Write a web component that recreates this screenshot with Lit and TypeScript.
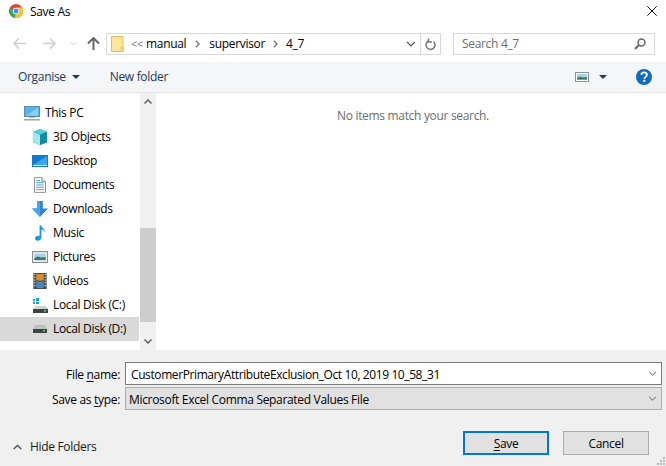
import { LitElement, html, css, svg } from "lit";
import { customElement } from "lit/decorators.js";

const chev = (w = 10, h = 6, c = "#555") => html`<svg width=${w} height=${h} viewBox="0 0 10 6"><path d="M1 1l4 4 4-4" fill="none" stroke=${c} stroke-width="1.2"/></svg>`;

const picture = svg`<rect x=".5" y=".5" width="13" height="9" fill="#fff" stroke="#8f8f8f"/><rect x="2" y="2" width="10" height="6" fill="#a9d3ea"/><path d="M2 6l3-1.500 3 1 4-.5v2.500H2z" fill="#3f7a5c"/>`;

const icons: Record<string, unknown> = {
  pc: html`<svg width="16" height="15" viewBox="0 0 16 15"><rect x=".5" y=".5" width="15" height="10" fill="#4fb6f0" stroke="#5f8fa8"/><path d="M2 9.500L14 2v7.500z" fill="#8ad4f7"/><rect x="5" y="11" width="6" height="1" fill="#9db4c0"/><rect y="13" width="16" height="1.500" fill="#9aa7ae"/></svg>`,
  obj: html`<svg width="16" height="16" viewBox="0 0 17 17"><path d="M8.500 0L16 3v11l-7.500 3L1 14V3z" fill="#18a9b8"/><path d="M1 3l7.500 3v11L1 14z" fill="#a7e7ec"/><path d="M8.500 0L16 3 8.500 6 1 3z" fill="#4dd0da"/><path d="M8.500 6L16 3v11l-7.500 3z" fill="#0f8da3"/></svg>`,
  desk: html`<svg width="16" height="12" viewBox="0 0 16 12"><rect width="16" height="12" fill="#0f79d0"/><path d="M1 10L15 1v9z" fill="#3fa3ea"/><rect x="1" y="10" width="14" height="1" fill="#d9eefb"/></svg>`,
  docs: html`<svg width="12" height="16" viewBox="0 0 13 17"><path d="M.5.500h8l4 4v12H.5z" fill="#fff" stroke="#8a8a8a"/><path d="M8.500.500v4h4" fill="#e3e3e3" stroke="#8a8a8a"/><path d="M2.500 3.500h4M2.500 6h8M2.500 8.500h8M2.500 11h8M2.500 13.500h8" stroke="#2f9bd8"/></svg>`,
  down: html`<svg width="16" height="16" viewBox="0 0 17 17"><path d="M5.500 0h6v8H17l-8.500 9L0 8h5.500z" fill="#2f86d6"/><path d="M5.500 0h3v17L0 8h5.500z" fill="#4ba2ea"/></svg>`,
  music: html`<svg width="11" height="16" viewBox="0 0 12 17"><path d="M5 0h1.700c.3 3 4.800 4 4.300 8-.6-2-2.700-3-4-3.200V13.500C7 15.500 5 17 3 17S0 15.800 0 14.300 1.700 11.500 3.500 11.500c.6 0 1.100.1 1.500.3z" fill="#1c96e8"/></svg>`,
  pics: html`<svg width="16" height="12" viewBox="0 0 14 10" preserveAspectRatio="none">${picture}</svg>`,
  vid: html`<svg width="14" height="16" viewBox="0 0 14 17"><rect width="14" height="17" fill="#3f4a50"/><rect x="3" y="1" width="8" height="7" fill="#d98f2a"/><rect x="3" y="9" width="8" height="7" fill="#4f86b8"/><path d="M1 1.500h1M1 4.500h1M1 7.500h1M1 10.500h1M1 13.500h1M12 1.500h1M12 4.500h1M12 7.500h1M12 10.500h1M12 13.500h1" stroke="#fff" stroke-width="1.400"/></svg>`,
  c: html`<svg width="15" height="15" viewBox="0 0 15 15"><path d="M0 1h2v2H0zM3 0h3v3H3zM0 4h2v2H0zM3 4h3v2H3z" fill="#1ba1e2"/><path d="M2 8h11l2 3H0z" fill="#cfd3d4"/><rect y="11" width="15" height="4" fill="#3d4446"/><rect x="11" y="12" width="2" height="1.500" fill="#5fd35f"/></svg>`,
  d: html`<svg width="14" height="8" viewBox="0 0 14 8"><path d="M2 0h10l2 4H0z" fill="#bcc0c1"/><rect y="4" width="14" height="4" fill="#3d4446"/><rect x="10" y="5" width="2" height="1.500" fill="#5fd35f"/></svg>`,
};

const items: [string, string][] = [
  ["3D Objects", "obj"], ["Desktop", "desk"], ["Documents", "docs"], ["Downloads", "down"], ["Music", "music"],
  ["Pictures", "pics"], ["Videos", "vid"], ["Local Disk (C:)", "c"], ["Local Disk (D:)", "d"],
];

function chevR() {
  return html`<svg width="5" height="8" viewBox="0 0 5 8"><path d="M.8.800L4 4 .8 7.200" fill="none" stroke="#777" stroke-width="1.400"/></svg>`;
}

@customElement("app-root")
export class AppRoot extends LitElement {
  static styles = css`
    :host { display: block; width: 666px; height: 466px; background: #fff; overflow: hidden; }
    * { box-sizing: border-box; }
    .win { width: 666px; height: 466px; display: flex; flex-direction: column; font: 12px/16px "Open Sans", "Noto Sans", sans-serif; letter-spacing: -0.32px; color: #000; }
    .title { height: 33px; flex: none; display: flex; align-items: flex-start; padding: 4px 9px 0 9px; gap: 7px; }
    .title .x { margin-left: auto; margin-top: 2px; }
    .nav { height: 29px; flex: none; display: flex; align-items: flex-start; padding: 0 11px 0 13px; }
    .navbtns { width: 93px; height: 21px; display: flex; align-items: center; flex: none; }
    .fwd { margin-left: 17px; }
    .rec { margin-left: 14px; }
    .up { margin-left: 10px; }
    .addr { width: 335px; height: 22px; border: 1px solid #d9d9d9; display: flex; align-items: center; flex: none; }
    .folder { margin-left: 4px; flex: none; }
    .crumbs { flex: 1; display: flex; align-items: center; margin-left: 7px; color: #000; }
    .mark { color: #777; font-size: 11px; width: 15px; }
    .crumbs .sep { margin: 0 9px; display: flex; }
    .crumbs .sep.s2 { margin: 0 8px; }
    .addr .dd { width: 22px; display: flex; justify-content: center; padding-left: 3px; }
    .addr .rf { width: 20px; height: 20px; border-left: 1px solid #d9d9d9; display: flex; align-items: center; justify-content: center; }
    .search { width: 202px; height: 22px; margin-left: 12px; border: 1px solid #d9d9d9; display: flex; align-items: center; padding: 0 8px 0 8px; color: #6d6d6d; justify-content: space-between; }
    .tools { height: 31px; flex: none; background: #f5f6f7; border-bottom: 1px solid #e5e5e5; display: flex; align-items: center; padding: 0 14px 0 18px; color: #1e395b; }
    .org { display: flex; align-items: center; gap: 6px; }
    .tri { width: 0; height: 0; border-left: 4px solid transparent; border-right: 4px solid transparent; border-top: 4px solid #1e395b; }
    .nf { margin-left: 30px; }
    .view { margin-left: auto; display: flex; align-items: center; gap: 10px; margin-right: 29px; }
    .main { flex: 1; display: flex; min-height: 0; }
    .side { width: 140px; padding-top: 8px; flex: none; }
    .row { width: 139px; height: 24px; display: flex; align-items: center; padding-left: 32px; gap: 5px; color: #000; }
    .row.top { padding-left: 24px; gap: 5px; }
    .row .ic { width: 16px; display: flex; justify-content: center; flex: none; }
    .row.sel { background: #d9d9d9; }
    .bar { width: 16px; flex: none; background: #f0f0f0; display: flex; flex-direction: column; align-items: center; }
    .bar .btn { height: 17px; display: flex; align-items: center; justify-content: center; flex: none; }
    .bar .sp1 { height: 118px; flex: none; }
    .bar .thumb { width: 100%; height: 94px; background: #cdcdcd; flex: none; }
    .bar .sp2 { flex: 1; }
    .pane { flex: 1; text-align: center; padding: 15px 0 0 4px; color: #6d6d6d; }
    .bottom { height: 116px; flex: none; background: #f0f0f0; padding: 12px 4px 0 0; position: relative; }
    .fld { display: flex; align-items: center; height: 23px; margin-bottom: 2px; }
    .lab { width: 120px; text-align: right; flex: none; margin-right: 5px; padding-top: 2px; }
    .inp { width: 537px; height: 23px; border: 1px solid #7a7a7a; background: #fff; display: flex; align-items: center; justify-content: space-between; padding: 0 4px 0 5px; white-space: nowrap; }
    .val { padding-top: 2px; }
    .fn { letter-spacing: -0.4px; }
    .inp.sel { background: #e1e1e1; border-color: #adadad; padding-left: 3px; }
    u { text-underline-offset: 2px; }
    .acts { display: flex; align-items: flex-start; margin-top: 21px; padding: 0 13px 0 13px; }
    .hide { display: flex; align-items: center; gap: 8px; color: #1a1a1a; margin-top: 8px; }
    .btns { margin-left: auto; display: flex; gap: 14px; }
    .b { width: 86px; height: 24px; border: 1px solid #adadad; background: #e1e1e1; display: flex; align-items: center; justify-content: center; padding-top: 2px; }
    .b.def { border: 2px solid #0078d7; }
    .grip { position: absolute; right: 1px; bottom: 1px; }
  `;

  render() {
    return html`<div class="win">
      <div class="title">
        <svg width="14" height="14" viewBox="0 0 14 14"><circle cx="7" cy="7" r="7" fill="#e0463a"/><path d="M7 7L1.200 3.900A7 7 0 0 0 6 13.900z" fill="#34a853"/><path d="M7 3.500h6.400A7 7 0 0 1 6 13.900z" fill="#fbc02d"/><circle cx="7" cy="7" r="3.300" fill="#fff"/><circle cx="7" cy="7" r="2.500" fill="#4a8df0"/></svg>
        <span>Save As</span>
        <svg class="x" width="10" height="10" viewBox="0 0 10 10"><path d="M.3.300l9.400 9.400M9.700.300L.3 9.700" stroke="#111" stroke-width="1"/></svg>
      </div>
      <div class="nav">
        <div class="navbtns">
          <svg width="13" height="11" viewBox="0 0 13 11"><path d="M6 .5L1 5.500l5 5M1 5.500h12" fill="none" stroke="#d0d0d0" stroke-width="1.600"/></svg>
          <svg class="fwd" width="13" height="11" viewBox="0 0 13 11"><path d="M7 .5l5 5-5 5M12 5.500H0" fill="none" stroke="#d0d0d0" stroke-width="1.600"/></svg>
          <svg class="rec" width="7" height="5" viewBox="0 0 7 5"><path d="M.5 1l3 3 3-3" fill="none" stroke="#d0d0d0"/></svg>
          <svg class="up" width="13" height="13" viewBox="0 0 13 13"><path d="M1 6.500l5.500-5.500 5.500 5.500M6.500 1v12" fill="none" stroke="#666" stroke-width="2"/></svg>
        </div>
        <div class="addr">
          <svg class="folder" width="13" height="16" viewBox="0 0 13 16"><path d="M.5.500h11.500v15H.5z" fill="#fde59a" stroke="#e0c060"/><path d="M10 11h2.500v4.500H10z" fill="#f8d775" stroke="#e0c060" stroke-width=".6"/></svg>
          <div class="crumbs">
            <span class="mark">&lt;&lt;</span><span>manual</span>
            <span class="sep">${chevR()}</span><span>supervisor</span>
            <span class="sep s2">${chevR()}</span><span>4_7</span>
          </div>
          <span class="dd">${chev(10, 6, "#555")}</span>
          <span class="rf"><svg width="11" height="13" viewBox="0 0 11 13"><path d="M3 3.200a4.500 4.500 0 1 0 5.500.3M3.500.5v3.500H7" fill="none" stroke="#777" stroke-width="1.500"/></svg></span>
        </div>
        <div class="search"><span>Search 4_7</span>
          <svg width="12" height="12" viewBox="0 0 12 12"><circle cx="7.500" cy="4.500" r="3.500" fill="none" stroke="#666" stroke-width="1.500"/><path d="M5 7l-4 4" stroke="#666" stroke-width="2"/></svg>
        </div>
      </div>
      <div class="tools">
        <div class="org"><span>Organise</span><span class="tri"></span></div>
        <span class="nf">New folder</span>
        <div class="view">
          <svg width="14" height="10" viewBox="0 0 14 10">${picture}</svg>
          <span class="tri"></span>
        </div>
        <svg width="16" height="16" viewBox="0 0 16 16"><circle cx="8" cy="8" r="8" fill="#0f6cbd"/><path d="M5.300 6c0-3.400 5.600-3.500 5.600-.3 0 2.300-2.500 2-2.500 4" fill="none" stroke="#fff" stroke-width="1.800"/><rect x="7.300" y="10.800" width="2" height="2" fill="#fff"/></svg>
      </div>
      <div class="main">
        <div class="side">
          <div class="row top"><span class="ic">${icons.pc}</span><span>This PC</span></div>
          ${items.map(([n, k], i) => html`<div class="row ${i === 8 ? "sel" : ""}"><span class="ic">${icons[k]}</span><span>${n}</span></div>`)}
        </div>
        <div class="bar">
          <div class="btn"><svg width="8" height="5" viewBox="0 0 8 5"><path d="M.5 4.500L4 1l3.500 3.500" fill="none" stroke="#606060" stroke-width="1.500"/></svg></div>
          <div class="sp1"></div><div class="thumb"></div><div class="sp2"></div>
          <div class="btn"><svg width="8" height="5" viewBox="0 0 8 5"><path d="M.5.500L4 4 7.500.5" fill="none" stroke="#606060" stroke-width="1.500"/></svg></div>
        </div>
        <div class="pane">No items match your search.</div>
      </div>
      <div class="bottom">
        <div class="fld"><span class="lab">File <u>n</u>ame:</span><div class="inp"><span class="val fn">CustomerPrimaryAttributeExclusion_Oct 10, 2019 10_58_31</span>${chev(9, 5, "#555")}</div></div>
        <div class="fld"><span class="lab">Save as <u>t</u>ype:</span><div class="inp sel"><span class="val">Microsoft Excel Comma Separated Values File</span>${chev(9, 5, "#555")}</div></div>
        <div class="acts">
          <div class="hide"><svg width="9" height="6" viewBox="0 0 9 6"><path d="M.7 5L4.500 1.500 8.300 5" fill="none" stroke="#555" stroke-width="1.500"/></svg><span>Hide Folders</span></div>
          <div class="btns"><div class="b def"><span><u>S</u>ave</span></div><div class="b"><span>Cancel</span></div></div>
        </div>
        <svg class="grip" width="9" height="9" viewBox="0 0 9 9" fill="#bbb"><rect x="7" y="1" width="2" height="2"/><rect x="4" y="4" width="2" height="2"/><rect x="7" y="4" width="2" height="2"/><rect x="1" y="7" width="2" height="2"/><rect x="4" y="7" width="2" height="2"/><rect x="7" y="7" width="2" height="2"/></svg>
      </div>
    </div>`;
  }
}
